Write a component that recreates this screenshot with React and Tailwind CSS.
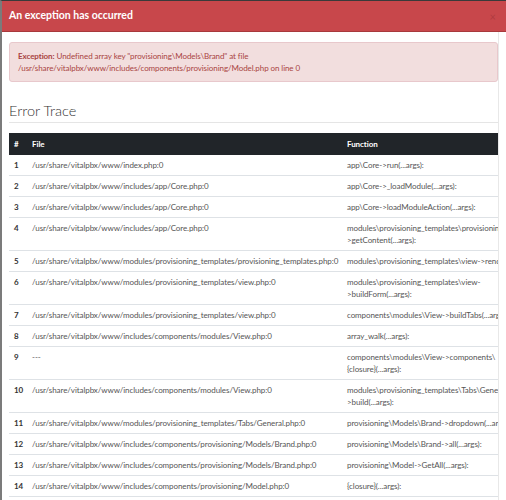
import React from "react";

const rows = [
  { n: 1, file: ["/usr/share/vitalpbx/www/index.php:0"], fn: ["app\\Core->run(...args):"] },
  { n: 2, file: ["/usr/share/vitalpbx/www/includes/app/Core.php:0"], fn: ["app\\Core->_loadModule(...args):"] },
  { n: 3, file: ["/usr/share/vitalpbx/www/includes/app/Core.php:0"], fn: ["app\\Core->loadModuleAction(...args):"] },
  {
    n: 4,
    file: ["/usr/share/vitalpbx/www/includes/app/Core.php:0"],
    fn: ["modules\\provisioning_templates\\provisioning_templates-", ">getContent(...args):"],
  },
  {
    n: 5,
    file: ["/usr/share/vitalpbx/www/modules/provisioning_templates/provisioning_templates.php:0"],
    fn: ["modules\\provisioning_templates\\view->render(...args):"],
  },
  {
    n: 6,
    file: ["/usr/share/vitalpbx/www/modules/provisioning_templates/view.php:0"],
    fn: ["modules\\provisioning_templates\\view-", ">buildForm(...args):"],
  },
  {
    n: 7,
    file: ["/usr/share/vitalpbx/www/modules/provisioning_templates/view.php:0"],
    fn: ["components\\modules\\View->buildTabs(...args):"],
  },
  { n: 8, file: ["/usr/share/vitalpbx/www/includes/components/modules/View.php:0"], fn: ["array_walk(...args):"] },
  { n: 9, file: ["---"], fn: ["components\\modules\\View->components\\", "{closure}(...args):"] },
  {
    n: 10,
    file: ["/usr/share/vitalpbx/www/includes/components/modules/View.php:0"],
    fn: ["modules\\provisioning_templates\\Tabs\\General-", ">build(...args):"],
  },
  {
    n: 11,
    file: ["/usr/share/vitalpbx/www/modules/provisioning_templates/Tabs/General.php:0"],
    fn: ["provisioning\\Models\\Brand->dropdown(...args):"],
  },
  {
    n: 12,
    file: ["/usr/share/vitalpbx/www/includes/components/provisioning/Models/Brand.php:0"],
    fn: ["provisioning\\Models\\Brand->all(...args):"],
  },
  {
    n: 13,
    file: ["/usr/share/vitalpbx/www/includes/components/provisioning/Models/Brand.php:0"],
    fn: ["provisioning\\Model->GetAll(...args):"],
  },
  {
    n: 14,
    file: ["/usr/share/vitalpbx/www/includes/components/provisioning/Model.php:0"],
    fn: ["{closure}(...args):"],
  },
];

const Lines = ({ lines }) => (
  <>
    {lines.map((l, i) => (
      <div key={i}>{l}</div>
    ))}
  </>
);

export default function App() {
  return (
    <div
      className="w-[506px] h-[500px] overflow-hidden bg-white border-t border-t-[#3a3a3a] border-l-2 border-l-[#7b7b7b] flex flex-col"
      style={{ fontFamily: 'Lato, "Open Sans", sans-serif' }}
    >
      {/* modal header */}
      <div className="h-[31px] shrink-0 bg-[#c8474b] border-b border-b-[#a8393c] flex items-center justify-between pl-[7px] pr-[10px]">
        <span className="text-white font-bold text-[10.5px]">An exception has occurred</span>
        <span className="text-[#b03c40] text-[11px] leading-none">×</span>
      </div>

      {/* modal body */}
      <div className="flex flex-1 min-h-0">
        <div className="flex-1 min-w-0 pl-[7px] pt-[10px] overflow-hidden">
          <div className="h-[40px] bg-[#f2dede] border border-[#e8c8cc] rounded-[3px] px-[8px] pt-[7px] text-[8px] tracking-[-0.08px] leading-[12px] text-[#a94442]">
            <div>
              <span className="font-bold">Exception:</span> Undefined array key "provisioning\Models\Brand" at file
            </div>
            <div>/usr/share/vitalpbx/www/includes/components/provisioning/Model.php on line 0</div>
          </div>

          <div className="mt-[20px] pb-[3px] border-b border-[#e5e5e5] text-[14.5px] leading-[17px] text-[#333] font-light">
            Error Trace
          </div>

          <div className="mt-[10px] overflow-hidden">
            <table className="table-fixed w-[580px] border-collapse text-[8px] tracking-[-0.08px] leading-[12px] text-[#555]">
              <colgroup>
                <col className="w-[19px]" />
                <col className="w-[315px]" />
                <col className="w-[246px]" />
              </colgroup>
              <thead>
                <tr className="bg-[#212529] text-white font-bold">
                  <th className="text-left py-[5px] pl-[5px]">#</th>
                  <th className="text-left py-[5px] pl-[4px]">File</th>
                  <th className="text-left py-[5px] pl-[4px]">Function</th>
                </tr>
              </thead>
              <tbody>
                {rows.map((r) => (
                  <tr key={r.n} className="border-b border-[#dee2e6] align-top">
                    <td className="py-[4px] pl-[5px] font-bold text-[#333] whitespace-nowrap">{r.n}</td>
                    <td className="py-[4px] pl-[4px] whitespace-nowrap">
                      <Lines lines={r.file} />
                    </td>
                    <td className="py-[4px] pl-[4px] whitespace-nowrap">
                      <Lines lines={r.fn} />
                    </td>
                  </tr>
                ))}
              </tbody>
            </table>
          </div>
        </div>
        <div className="w-[8px] shrink-0 border-l border-[#e8e8e8] bg-white" />
      </div>
    </div>
  );
}
